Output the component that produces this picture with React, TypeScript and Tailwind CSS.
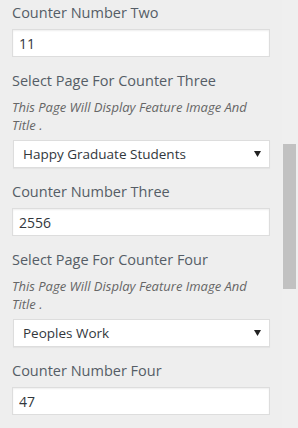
const FONT = "font-['Open_Sans',sans-serif]";

function Label({ children }: { children: string }) {
  return (
    <span className="mb-1 block text-[14.5px] leading-6 font-normal text-[#555d66]">{children}</span>
  );
}

function NumberControl({ label, value }: { label: string; value: string }) {
  return (
    <li className="mb-3">
      <Label>{label}</Label>
      <input
        readOnly
        defaultValue={value}
        className="block h-7 w-full border border-[#ddd] bg-white px-[6px] text-[14px] text-[#32373c] shadow-[inset_0_1px_2px_rgba(0,0,0,0.07)] outline-none"
      />
    </li>
  );
}

function PageControl({ label, value }: { label: string; value: string }) {
  return (
    <li className="mb-3">
      <Label>{label}</Label>
      <span className="mb-[6px] block pt-px text-[13px] leading-[18px] italic text-[#666]">
        This Page Will Display Feature Image And Title .
      </span>
      <div className="relative ml-px">
        <select
          defaultValue={value}
          className="block h-7 w-full appearance-none border border-[#ddd] bg-white pl-[9px] text-[13.5px] text-[#32373c] shadow-[0_1px_1px_rgba(0,0,0,0.04)] outline-none"
        >
          <option>{value}</option>
        </select>
        <svg
          className="pointer-events-none absolute top-[11px] right-[9px]"
          width="7"
          height="6"
          viewBox="0 0 7 6"
        >
          <path d="M0 0h7L3.5 6z" fill="#222" />
        </svg>
      </div>
    </li>
  );
}

export default function App() {
  return (
    <div className={`${FONT} flex h-[428px] w-[298px] overflow-hidden bg-[#eee]`}>
      <ul className="w-[282px] shrink-0 px-3 pt-px">
        <NumberControl label="Counter Number Two" value="11" />
        <PageControl label="Select Page For Counter Three" value="Happy Graduate Students" />
        <NumberControl label="Counter Number Three" value="2556" />
        <PageControl label="Select Page For Counter Four" value="Peoples Work" />
        <NumberControl label="Counter Number Four" value="47" />
      </ul>
      {/* scrollbar */}
      <div className="flex-1 bg-[#efefef]">
        <div className="mt-[144px] ml-px h-[145px] w-[13px] bg-[#c1c1c1]" />
      </div>
    </div>
  );
}
